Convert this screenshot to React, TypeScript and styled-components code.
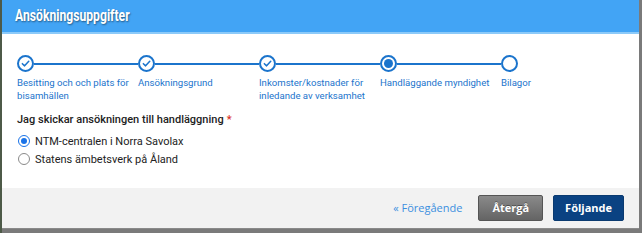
import React, { useState } from 'react';
import styled, { createGlobalStyle } from 'styled-components';

const GlobalStyle = createGlobalStyle`
  html, body {
    margin: 0;
    padding: 0;
    background: #6e6e6e;
    font-family: Roboto, "Liberation Sans", Arial, sans-serif;
  }
  * { box-sizing: border-box; }
`;

const Page = styled.div`
  height: 233px;
  overflow: hidden;
  padding: 0 3px 0 2px;
  background: linear-gradient(to right, #4d5a48 0, #4d5a48 2px, #7a7a7a 2px);
`;

const Modal = styled.div`
  width: 637px;
  background: #ffffff;
  border-bottom: 1px solid #8a8a8a;
`;

const Header = styled.div`
  height: 34px;
  background: #42a4f5;
  border-bottom: 2px solid #8ccaf9;
  display: flex;
  align-items: center;
  padding: 0 0 1px 13px;
`;

const Title = styled.h1`
  margin: 0;
  color: #ffffff;
  font-family: Roboto, "Liberation Sans", sans-serif;
  font-weight: bold;
  font-size: 16px;
  transform: scaleX(0.76);
  transform-origin: left center;
  text-shadow: 1px 1px 2px rgba(0, 0, 0, 0.45);
`;

const Body = styled.div`
  padding: 21px 15px 0 15px;
  height: 154px;
`;

const Steps = styled.div`
  display: flex;
`;

const Step = styled.div<{ $last?: boolean }>`
  width: ${(p) => (p.$last ? 'auto' : '121px')};
  display: flex;
  flex-direction: column;
`;

const StepTop = styled.div`
  display: flex;
  align-items: center;
  height: 17px;
`;

const Circle = styled.div<{ $state: 'done' | 'active' | 'todo' }>`
  width: 17px;
  height: 17px;
  border-radius: 50%;
  border: 2px solid #1b74cc;
  background: #ffffff;
  display: flex;
  align-items: center;
  justify-content: center;
  flex-shrink: 0;
  &::after {
    content: '';
    display: ${(p) => (p.$state === 'active' ? 'block' : 'none')};
    width: 9px;
    height: 9px;
    border-radius: 50%;
    background: #1b74cc;
  }
`;

const Connector = styled.div`
  flex: 1;
  height: 2px;
  background: #1b74cc;
`;

const StepLabel = styled.div`
  margin-top: 4px;
  width: 116px;
  font-size: 9.6px;
  line-height: 13px;
  color: #1b74cc;
`;

const Question = styled.div`
  margin-top: 10px;
  font-size: 11px;
  font-weight: 500;
  color: #222222;
  line-height: 16px;
`;

const Required = styled.span`
  color: #d93025;
  margin-left: 3px;
`;

const RadioList = styled.div`
  margin-top: 4px;
  display: flex;
  flex-direction: column;
`;

const RadioRow = styled.label`
  display: flex;
  align-items: center;
  height: 18px;
  font-size: 11px;
  color: #222222;
  cursor: pointer;
`;

const RadioDot = styled.span<{ $checked: boolean }>`
  width: 12px;
  height: 12px;
  border-radius: 50%;
  margin-left: 1px;
  margin-right: 5px;
  border: 1.5px solid ${(p) => (p.$checked ? '#1a73e8' : '#8a8a8a')};
  background: #ffffff;
  display: flex;
  align-items: center;
  justify-content: center;
  &::after {
    content: '';
    display: ${(p) => (p.$checked ? 'block' : 'none')};
    width: 6px;
    height: 6px;
    border-radius: 50%;
    background: #1a73e8;
  }
`;

const Footer = styled.div`
  height: 40px;
  background: #f2f2f2;
  display: flex;
  align-items: center;
  justify-content: flex-end;
  padding: 0 15px 1px 0;
  gap: 10px;
`;

const BackLink = styled.a`
  font-family: "Open Sans", sans-serif;
  font-size: 11px;
  color: #3b8fe0;
  text-decoration: none;
  margin-right: 6px;
  cursor: pointer;
`;

const Button = styled.button<{ $primary?: boolean }>`
  height: 26px;
  padding: 0 ${(p) => (p.$primary ? '11px' : '13px')};
  border-radius: 2px;
  font-family: "Open Sans", sans-serif;
  font-weight: bold;
  font-size: 11px;
  color: #ffffff;
  cursor: pointer;
  border: 1px solid ${(p) => (p.$primary ? '#0a3a70' : '#555555')};
  background: ${(p) =>
    p.$primary ? '#0a4282' : 'linear-gradient(to bottom, #8a8a8a, #646464)'};
  text-shadow: ${(p) => (p.$primary ? 'none' : '0 -1px 0 rgba(0,0,0,0.4)')};
`;

const Check = () => (
  <svg width="9" height="9" viewBox="0 0 10 10" fill="none">
    <polyline points="1.5,5.2 4,7.6 8.6,2.6" stroke="#1b74cc" strokeWidth="1.7" strokeLinecap="round" strokeLinejoin="round" />
  </svg>
);

const steps: { label: string; state: 'done' | 'active' | 'todo' }[] = [
  { label: 'Besitting och och plats för bisamhällen', state: 'done' },
  { label: 'Ansökningsgrund', state: 'done' },
  { label: 'Inkomster/kostnader för inledande av verksamhet', state: 'done' },
  { label: 'Handläggande myndighet', state: 'active' },
  { label: 'Bilagor', state: 'todo' },
];

const options = ['NTM-centralen i Norra Savolax', 'Statens ämbetsverk på Åland'];

const App: React.FC = () => {
  const [selected, setSelected] = useState(0);

  return (
    <Page>
      <GlobalStyle />
      <Modal>
        <Header>
          <Title>Ansökningsuppgifter</Title>
        </Header>
        <Body>
          <Steps>
            {steps.map((step, i) => (
              <Step key={step.label} $last={i === steps.length - 1}>
                <StepTop>
                  <Circle $state={step.state}>{step.state === 'done' && <Check />}</Circle>
                  {i < steps.length - 1 && <Connector />}
                </StepTop>
                <StepLabel>{step.label}</StepLabel>
              </Step>
            ))}
          </Steps>

          <Question>
            Jag skickar ansökningen till handläggning<Required>*</Required>
          </Question>
          <RadioList>
            {options.map((opt, i) => (
              <RadioRow key={opt} onClick={() => setSelected(i)}>
                <RadioDot $checked={selected === i} />
                {opt}
              </RadioRow>
            ))}
          </RadioList>
        </Body>
        <Footer>
          <BackLink>« Föregående</BackLink>
          <Button>Återgå</Button>
          <Button $primary>Följande</Button>
        </Footer>
      </Modal>
    </Page>
  );
};

export default App;
